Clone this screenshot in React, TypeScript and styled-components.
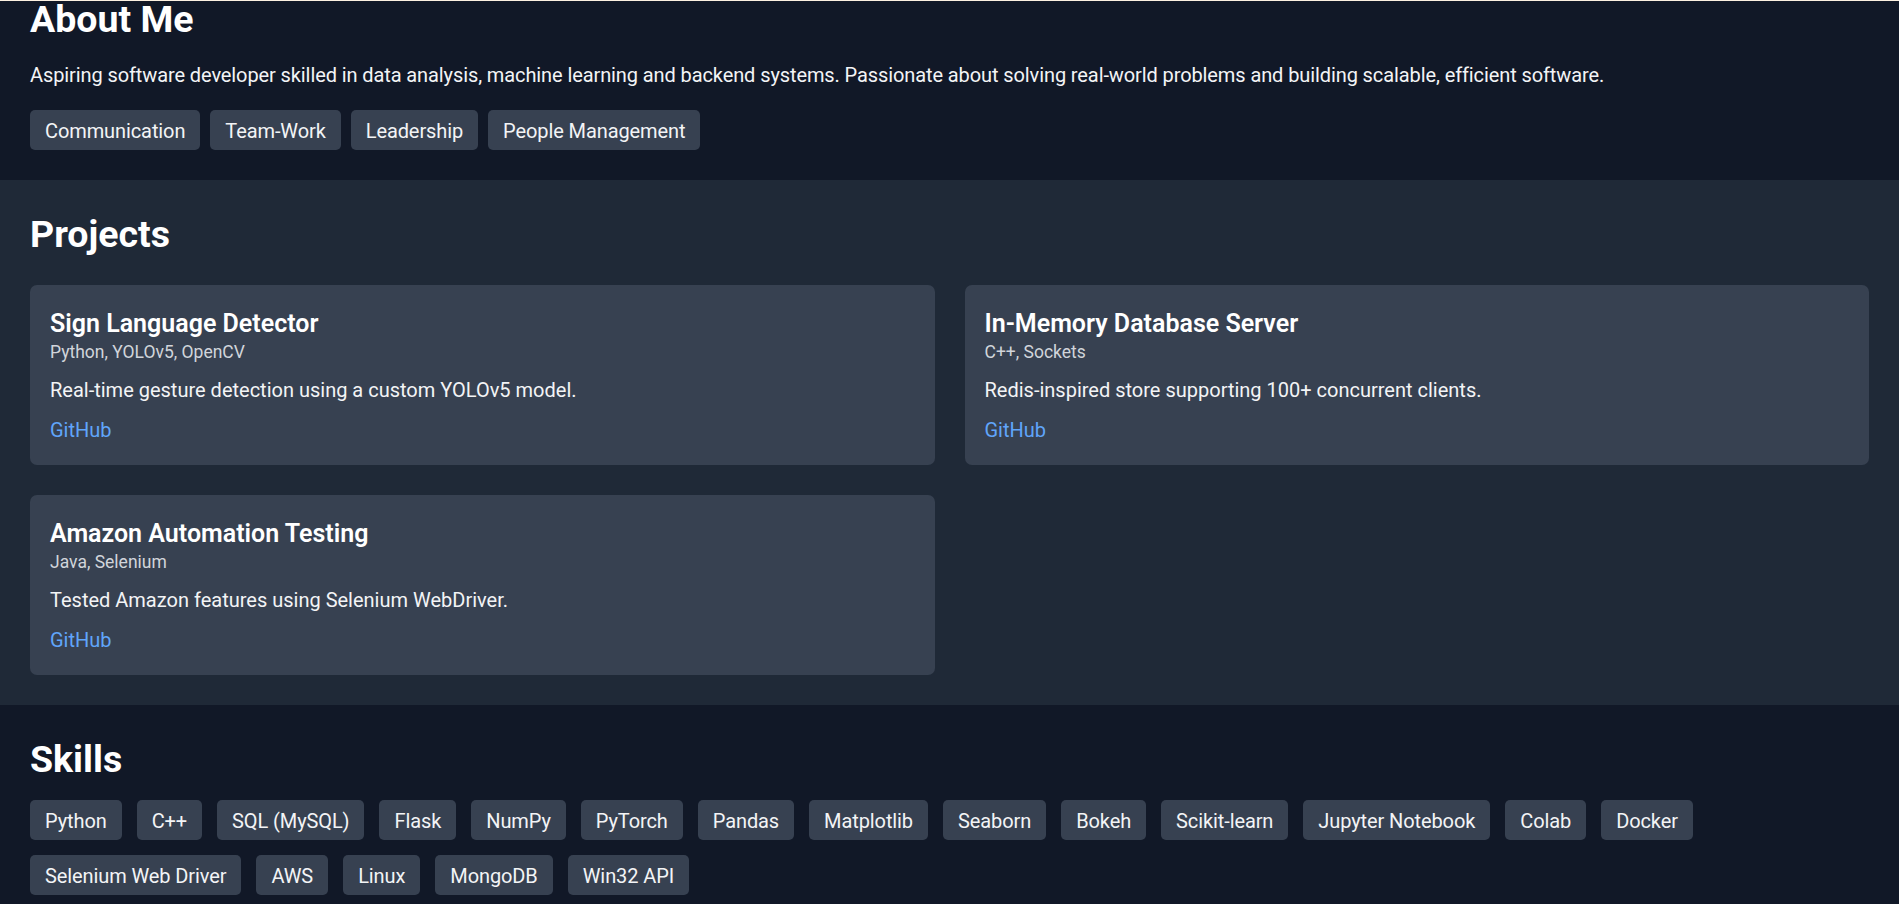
import React from "react";
import styled, { createGlobalStyle } from "styled-components";

const GlobalStyle = createGlobalStyle`
  html, body {
    margin: 0;
    padding: 0;
    background: #111827;
  }
  body {
    font-family: Roboto, "Liberation Sans", Arial, sans-serif;
    color: #f3f4f6;
    -webkit-font-smoothing: antialiased;
  }
  * { box-sizing: border-box; }
`;

const Page = styled.main`
  display: flex;
  flex-direction: column;
  border-top: 1px solid #fdf1e1;
`;

const Section = styled.section<{ $tone: "dark" | "mid"; $top?: boolean }>`
  background: ${(p) => (p.$tone === "dark" ? "#111827" : "#1f2937")};
  padding: ${(p) => (p.$top ? "0 30px 30px" : "30px")};
`;

const Heading = styled.h2<{ $gap?: number; $pull?: boolean }>`
  margin: ${(p) => (p.$pull ? "-6px" : "0")} 0 ${(p) => p.$gap ?? 20}px;
  padding-top: 3px;
  font-size: 37.5px;
  line-height: 42px;
  font-weight: 700;
  color: #ffffff;
`;

const Paragraph = styled.p`
  margin: 0 0 20px;
  padding-top: 1px;
  font-size: 20px;
  line-height: 29px;
  letter-spacing: -0.1px;
  color: #f3f4f6;
`;

const TagRow = styled.div<{ $gap: number }>`
  display: flex;
  flex-wrap: wrap;
  gap: ${(p) => p.$gap}px;
`;

const Tag = styled.span`
  display: inline-block;
  background: #374151;
  color: #f3f4f6;
  font-size: 20px;
  line-height: 30px;
  letter-spacing: -0.1px;
  padding: 6px 15px 4px;
  border-radius: 5px;
`;

const ProjectGrid = styled.div`
  display: grid;
  grid-template-columns: 1fr 1fr;
  gap: 30px;
`;

const Card = styled.article`
  background: #374151;
  border-radius: 7px;
  padding: 20px;
  display: flex;
  flex-direction: column;
`;

const CardTitle = styled.h3`
  margin: 0;
  padding-top: 2px;
  font-size: 25px;
  line-height: 33px;
  font-weight: 600;
  color: #ffffff;
`;

const CardStack = styled.div`
  margin: 0;
  font-size: 17.5px;
  line-height: 25px;
  color: #d1d5db;
`;

const CardText = styled.p`
  margin: 10px 0 0;
  padding-top: 1px;
  font-size: 20px;
  line-height: 29px;
  color: #f3f4f6;
`;

const CardLink = styled.a`
  margin-top: 10px;
  padding-top: 1px;
  font-size: 20px;
  line-height: 29px;
  color: #60a5fa;
  text-decoration: none;
  align-self: flex-start;
`;

const softSkills = ["Communication", "Team-Work", "Leadership", "People Management"];

const projects = [
  {
    title: "Sign Language Detector",
    stack: "Python, YOLOv5, OpenCV",
    text: "Real-time gesture detection using a custom YOLOv5 model.",
  },
  {
    title: "In-Memory Database Server",
    stack: "C++, Sockets",
    text: "Redis-inspired store supporting 100+ concurrent clients.",
  },
  {
    title: "Amazon Automation Testing",
    stack: "Java, Selenium",
    text: "Tested Amazon features using Selenium WebDriver.",
  },
];

const skills = [
  "Python",
  "C++",
  "SQL (MySQL)",
  "Flask",
  "NumPy",
  "PyTorch",
  "Pandas",
  "Matplotlib",
  "Seaborn",
  "Bokeh",
  "Scikit-learn",
  "Jupyter Notebook",
  "Colab",
  "Docker",
  "Selenium Web Driver",
  "AWS",
  "Linux",
  "MongoDB",
  "Win32 API",
];

export default function App() {
  return (
    <>
      <GlobalStyle />
      <Page>
        <Section $tone="dark" $top>
          <Heading $pull>About Me</Heading>
          <Paragraph>
            Aspiring software developer skilled in data analysis, machine learning and backend systems.
            Passionate about solving real-world problems and building scalable, efficient software.
          </Paragraph>
          <TagRow $gap={10}>
            {softSkills.map((s) => (
              <Tag key={s}>{s}</Tag>
            ))}
          </TagRow>
        </Section>

        <Section $tone="mid">
          <Heading $gap={30}>Projects</Heading>
          <ProjectGrid>
            {projects.map((p) => (
              <Card key={p.title}>
                <CardTitle>{p.title}</CardTitle>
                <CardStack>{p.stack}</CardStack>
                <CardText>{p.text}</CardText>
                <CardLink href="#">GitHub</CardLink>
              </Card>
            ))}
          </ProjectGrid>
        </Section>

        <Section $tone="dark">
          <Heading>Skills</Heading>
          <TagRow $gap={15}>
            {skills.map((s) => (
              <Tag key={s}>{s}</Tag>
            ))}
          </TagRow>
        </Section>
      </Page>
    </>
  );
}
